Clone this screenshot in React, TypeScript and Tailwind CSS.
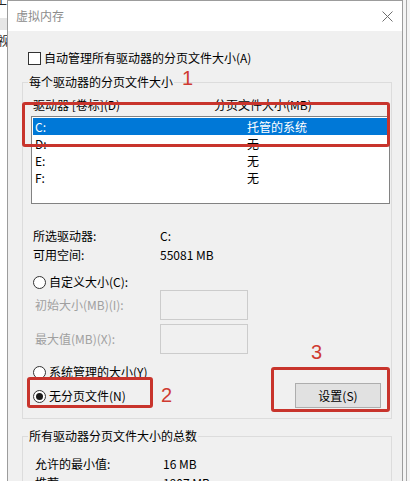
import React from "react";

const font = {
  fontFamily: '"Noto Sans CJK SC", "Microsoft YaHei", "Noto Sans", sans-serif',
};

function Radio({ checked }: { checked?: boolean }) {
  return (
    <span className="w-[13px] h-[13px] rounded-full border border-[#333333] bg-white flex items-center justify-center shrink-0">
      {checked && <span className="w-[7px] h-[7px] rounded-full bg-[#1a1a1a]" />}
    </span>
  );
}

export default function App() {
  const rows = [
    { d: "C:", v: "托管的系统", sel: true },
    { d: "D:", v: "无" },
    { d: "E:", v: "无" },
    { d: "F:", v: "无" },
  ];
  return (
    <div
      className="relative w-[410px] h-[481px] overflow-hidden bg-white text-[12px] text-black"
      style={font}
    >
      {/* background window (left) */}
      <div className="absolute left-0 top-0 w-[7px] h-[481px] bg-white overflow-hidden">
        <div className="absolute left-[-5px] top-[-9px] text-[12px] leading-[16px] text-[#222]">主</div>
        <div className="absolute left-0 top-[18px] w-[7px] h-[12px] bg-[#e6e6e6]" />
        <div className="absolute left-[-2px] top-[33px] text-[12px] leading-[16px] text-[#222]">视</div>
      </div>
      {/* background window (right) */}
      <div className="absolute left-[403px] top-0 w-[7px] h-[481px] bg-[#f4f4f4]">
        <div className="absolute left-[3px] top-0 w-px h-[481px] bg-[#a8a8a8]" />
      </div>

      {/* dialog */}
      <div className="absolute left-[7px] top-0 w-[396px] h-[500px] border border-[#9c9c9c] bg-[#f0f0f0] flex flex-col">
        <div className="h-[30px] bg-white flex items-center justify-between pl-[8px] pr-[9px] shrink-0">
          <span className="text-[#8c8c8c] leading-[16px]">虚拟内存</span>
          <svg width="11" height="11" viewBox="0 0 11 11">
            <path d="M0.5 0.5 L10.5 10.5 M10.5 0.5 L0.5 10.5" stroke="#6e6e6e" strokeWidth="1" />
          </svg>
        </div>

        <div className="flex flex-col pt-[19px]">
          {/* checkbox */}
          <div className="ml-[20px] flex items-center gap-[3px] h-[16px]">
            <span className="w-[13px] h-[13px] border border-[#333333] bg-white shrink-0" />
            <span className="leading-[16px]">自动管理所有驱动器的分页文件大小(A)</span>
          </div>

          {/* group 1 */}
          <fieldset className="ml-[14px] mt-[8px] w-[370px] border border-[#dcdcdc] pb-[10px]">
            <legend className="ml-[5px] px-[1px] leading-[16px]">每个驱动器的分页文件大小</legend>
            <div className="mt-[7px] flex h-[16px] leading-[16px] pl-[10px]">
              <span className="w-[181px]">驱动器 [卷标](D)</span>
              <span>分页文件大小(MB)</span>
            </div>
            <div className="ml-[8px] mt-[3px] w-[359px] h-[88px] border border-[#828282] bg-white p-px">
              {rows.map((r) => (
                <div
                  key={r.d}
                  className={
                    "h-[17px] flex items-center pl-[2px] leading-[17px] " +
                    (r.sel ? "bg-[#0078d7] text-white" : "")
                  }
                >
                  <span className="w-[212px]">{r.d}</span>
                  <span>{r.v}</span>
                </div>
              ))}
            </div>

            <div className="mt-[22px] ml-[10px] grid grid-cols-[127px_1fr] leading-[19px]">
              <span>所选驱动器:</span>
              <span>C:</span>
              <span>可用空间:</span>
              <span>55081 MB</span>
            </div>

            <div className="mt-[10px] ml-[10px] flex items-center gap-[3px] h-[16px] leading-[16px]">
              <Radio />
              <span>自定义大小(C):</span>
            </div>

            <div className="ml-[12px] flex flex-col gap-[4px]">
              <div className="flex items-center h-[30px]">
                <span className="w-[125px] text-[#a0a0a0]">初始大小(MB)(I):</span>
                <span className="w-[88px] h-[30px] border border-[#cccccc] bg-[#f0f0f0]" />
              </div>
              <div className="flex items-center h-[30px]">
                <span className="w-[125px] text-[#a0a0a0]">最大值(MB)(X):</span>
                <span className="w-[88px] h-[30px] border border-[#cccccc] bg-[#f0f0f0]" />
              </div>
            </div>

            <div className="mt-[10px] flex justify-between">
              <div className="ml-[10px] flex flex-col gap-[8px]">
                <div className="flex items-center gap-[3px] h-[16px] leading-[16px]">
                  <Radio />
                  <span>系统管理的大小(Y)</span>
                </div>
                <div className="flex items-center gap-[3px] h-[16px] leading-[16px]">
                  <Radio checked />
                  <span>无分页文件(N)</span>
                </div>
              </div>
              <button className="mt-[19px] mr-[10px] w-[86px] h-[25px] border border-[#adadad] bg-[#e1e1e1] leading-[16px] text-black">
                设置(S)
              </button>
            </div>
          </fieldset>

          {/* group 2 */}
          <fieldset className="ml-[14px] mt-[9px] w-[370px] border border-[#dcdcdc] pb-[10px]">
            <legend className="ml-[5px] px-[1px] leading-[16px]">所有驱动器分页文件大小的总数</legend>
            <div className="mt-[10px] ml-[12px] grid grid-cols-[128px_1fr] leading-[19px]">
              <span>允许的最小值:</span>
              <span>16 MB</span>
              <span>推荐:</span>
              <span>1907 MB</span>
              <span>当前已分配:</span>
              <span>0 MB</span>
            </div>
          </fieldset>
        </div>
      </div>

      {/* annotations */}
      <div className="absolute left-[22px] top-[102px] w-[368px] h-[45px] border-[3px] border-[#c8342c] rounded-[3px]" />
      <div className="absolute left-[27px] top-[377px] w-[126px] h-[31px] border-[3px] border-[#c8342c] rounded-[3px]" />
      <div className="absolute left-[271px] top-[367px] w-[119px] h-[45px] border-[3px] border-[#c8342c] rounded-[3px]" />
      <div className="absolute left-[182px] top-[66px] text-[20px] leading-[24px] text-[#cf3a30]" style={{ fontFamily: '"Liberation Sans", Arial, sans-serif' }}>1</div>
      <div className="absolute left-[161px] top-[383px] text-[20px] leading-[24px] text-[#cf3a30]" style={{ fontFamily: '"Liberation Sans", Arial, sans-serif' }}>2</div>
      <div className="absolute left-[311px] top-[340px] text-[20px] leading-[24px] text-[#cf3a30]" style={{ fontFamily: '"Liberation Sans", Arial, sans-serif' }}>3</div>
    </div>
  );
}
